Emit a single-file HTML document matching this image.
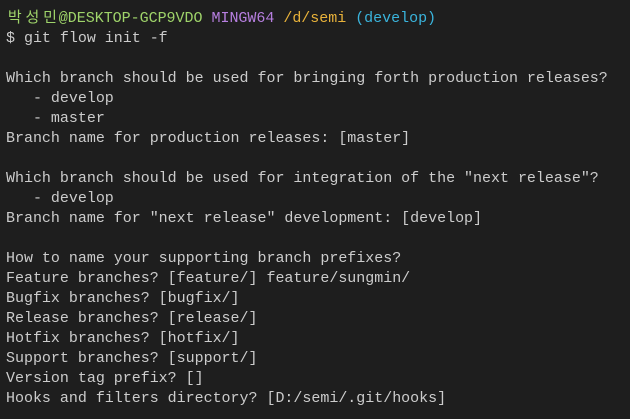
<!DOCTYPE html>
<html><head><meta charset="utf-8"><style>
html,body{margin:0;padding:0;background:#1e1e1e;width:630px;height:419px;overflow:hidden}
pre{margin:0;position:absolute;left:6px;top:9px;font-family:"Liberation Mono","Noto Sans CJK KR",monospace;font-size:15px;line-height:20px;letter-spacing:-0.02px;color:#cccccc}
.g{color:#9fd46a}.m{color:#b77fe0}.y{color:#e8b23a}.c{color:#3ab4dc}
.k{display:inline-block;width:17.6px;text-align:center}
</style></head><body><pre><span class="g"><span class="k">박</span><span class="k">성</span><span class="k">민</span>@DESKTOP-GCP9VDO</span> <span class="m">MINGW64</span> <span class="y">/d/semi</span> <span class="c">(develop)</span>
$ git flow init -f

Which branch should be used for bringing forth production releases?
   - develop
   - master
Branch name for production releases: [master]

Which branch should be used for integration of the "next release"?
   - develop
Branch name for "next release" development: [develop]

How to name your supporting branch prefixes?
Feature branches? [feature/] feature/sungmin/
Bugfix branches? [bugfix/]
Release branches? [release/]
Hotfix branches? [hotfix/]
Support branches? [support/]
Version tag prefix? []
Hooks and filters directory? [D:/semi/.git/hooks]</pre></body></html>
